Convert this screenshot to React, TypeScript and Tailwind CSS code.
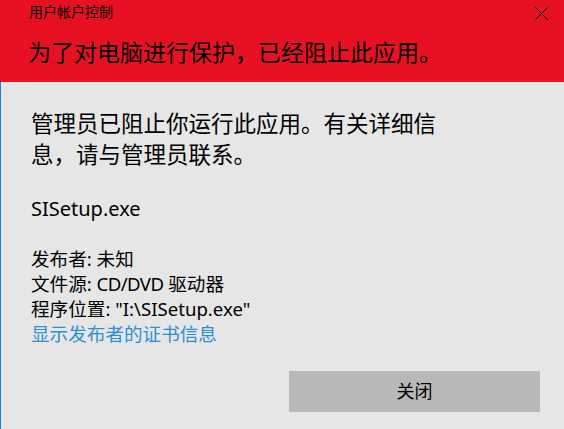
import React from "react";

const font = { fontFamily: '"Noto Sans", "Noto Sans CJK SC", sans-serif' };

export default function App() {
  return (
    <div
      className="w-[564px] h-[429px] flex flex-col overflow-hidden text-black"
      style={font}
    >
      <div className="relative h-[82px] bg-[#e81123] shrink-0">
        <div className="pl-[29px] pt-[2px] text-[14px] leading-[20px]">用户帐户控制</div>
        <div className="pl-[28px] mt-[15px] text-[23px] leading-[30px]">
          为了对电脑进行保护，已经阻止此应用。
        </div>
        <svg
          className="absolute top-[7px] right-[16px]"
          width="13"
          height="13"
          viewBox="0 0 13 13"
        >
          <path d="M0.5 0.5 L12.5 12.5 M12.5 0.5 L0.5 12.5" stroke="#000" strokeWidth="1" />
        </svg>
      </div>
      <div className="flex-1 bg-[#e6e6e6] border-l border-[#1883d7] pl-[30px] pr-[24px] flex flex-col">
        <div className="mt-[26px] text-[22.5px] leading-[31px] w-[420px]">
          管理员已阻止你运行此应用。有关详细信息，请与管理员联系。
        </div>
        <div className="mt-[25px] text-[20px] leading-[28px]">SISetup.exe</div>
        <div className="mt-[23px] text-[18.6px] leading-[25px]">
          <div>发布者: 未知</div>
          <div>
            文件源: <span className="tracking-[-0.6px]">CD/DVD</span> 驱动器
          </div>
          <div>程序位置: "I:\SISetup.exe"</div>
          <div className="text-[#2e8fd6]">显示发布者的证书信息</div>
        </div>
        <div className="mt-[25px] flex justify-end">
          <div className="w-[251px] h-[41px] bg-[#b8b8b8] flex items-center justify-center text-[18px]">
            关闭
          </div>
        </div>
      </div>
    </div>
  );
}
